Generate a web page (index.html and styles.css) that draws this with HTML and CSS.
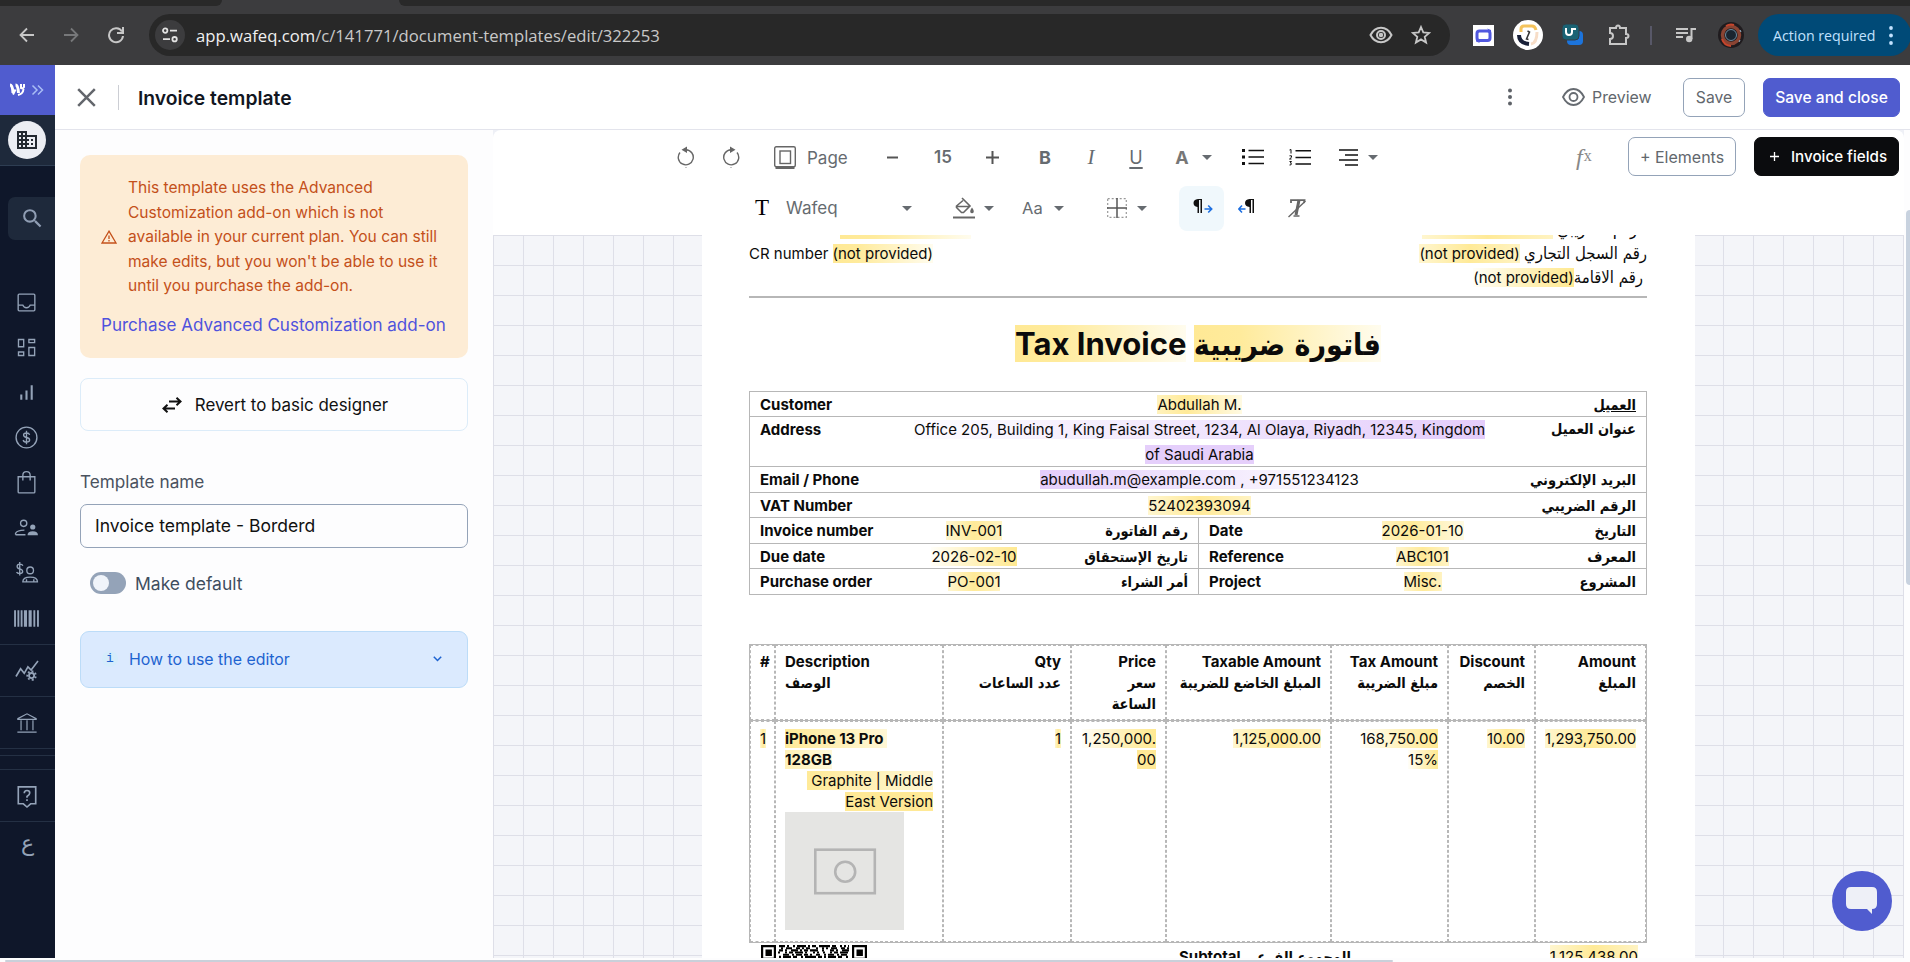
FILE: index.html
```html
<!DOCTYPE html>
<html lang="en">
<head>
<meta charset="utf-8">
<title>Invoice template</title>
<link rel="stylesheet" href="styles.css">
</head>
<body>
<div class="tabstrip"><span class="tab-left"></span><span class="tab-active"></span><span class="tab-right"></span></div>
<div class="browser">
  <svg class="b-back" width="16" height="16" viewBox="0 0 16 16" fill="none" stroke="#c7c7c7" stroke-width="1.8"><path d="M15 8H2M8 1.5L1.5 8L8 14.5"/></svg>
  <svg class="b-fwd" width="16" height="16" viewBox="0 0 16 16" fill="none" stroke="#77787a" stroke-width="1.8"><path d="M1 8H14M8 1.5L14.5 8L8 14.5"/></svg>
  <svg class="b-reload" width="18" height="18" viewBox="0 0 18 18" fill="none" stroke="#c7c7c7" stroke-width="2"><path d="M15 5.5A7 7 0 1 0 16 10"/><path d="M16 1v6h-6"/></svg>
  <div class="omnibox">
    <span class="site-info"><svg width="16" height="16" viewBox="0 0 16 16" fill="none" stroke="#e3e3e3" stroke-width="1.8"><circle cx="3.2" cy="3.6" r="2.2"/><path d="M8 3.6h7M1 12.2h7"/><circle cx="12.6" cy="12.2" r="2.2"/></svg></span>
    <span class="url"><b>app.wafeq.com</b>/c/141771/document-templates/edit/322253</span>
    <svg class="b-eye" width="24" height="18" viewBox="0 0 24 18" fill="none" stroke="#c7c7c7" stroke-width="2"><path d="M1.5 9C4 4 7.500 1.800 12 1.800S20 4 22.500 9C20 14 16.500 16.200 12 16.200S4 14 1.500 9z"/><circle cx="12" cy="9" r="4"/><circle cx="12" cy="9" r="1.200" fill="#c7c7c7"/></svg>
    <svg class="b-star" width="20" height="20" viewBox="0 0 20 20" fill="none" stroke="#c7c7c7" stroke-width="1.800"><path d="M10 2l2.300 5.400 5.900.5-4.500 3.900 1.400 5.700L10 14.400l-5.100 3.100 1.400-5.700L1.800 7.900l5.900-.5z"/></svg>
  </div>
  <svg class="x-one" width="21" height="21" viewBox="0 0 21 21"><path fill="#fff" d="M0 0h21v21H0z"/><rect x="4" y="6" width="13" height="9.500" rx="2.500" fill="none" stroke="#5158df" stroke-width="3"/><path fill="#5158df" d="M14 3.500l4 1.500v3zM7 18l-4-1.500v-3z"/></svg>
  <svg class="x-two" width="30" height="30" viewBox="0 0 30 30"><circle cx="15" cy="15" r="15" fill="#fff"/><path d="M8 12V9q0-3 3-3h8q3 0 4 4" fill="none" stroke="#f4c35c" stroke-width="3"/><path d="M6 15q0 8 10 9" fill="none" stroke="#182038" stroke-width="4"/><path d="M24 12q0 11-6 12" fill="none" stroke="#f7ddc7" stroke-width="3"/><path d="M14.500 11l2 1-3 7 2 .5" fill="none" stroke="#333" stroke-width="1.500"/></svg>
  <svg class="x-three" width="21" height="22" viewBox="0 0 21 22"><rect x="5" y="7" width="16" height="14" rx="4" fill="#1c74dc"/><rect width="17" height="16" rx="4" fill="#1a6374" stroke="#333c45"/><path d="M4 4v4q0 3 3 3 3 0 3-3V5h4" fill="none" stroke="#fff" stroke-width="2"/></svg>
  <svg class="x-puzzle" width="22" height="22" viewBox="0 0 22 22" fill="none" stroke="#c7c7c7" stroke-width="2"><path d="M2 4h6q0-2.500 2-2.500T12 4h6v6q2.500 0 2.500 2T18 14v6H2v-5q3 0 3-3T2 9z"/></svg>
  <span class="b-sep"></span>
  <svg class="x-music" width="20" height="16" viewBox="0 0 20 16" fill="none" stroke="#c7c7c7" stroke-width="2"><path d="M0 2h12M0 6h12M0 10h7M15.500 12V2H20"/><circle cx="13.200" cy="12" r="2.200" fill="#c7c7c7"/></svg>
  <svg class="x-avatar" width="26" height="26" viewBox="0 0 26 26"><circle cx="13" cy="13" r="13" fill="#1f1b1e"/><circle cx="13" cy="13" r="8.500" fill="none" stroke="#8a4433" stroke-width="3.500"/><path d="M4 17a10 10 0 0 0 9 7M8 4a10 10 0 0 1 8-1" fill="none" stroke="#c7452c" stroke-width="2"/><circle cx="13" cy="13" r="5.500" fill="#1a2530" stroke="#6d8ba0"/><path d="M22 8l1 2M22 18l-1 2" stroke="#9cb8cc"/></svg>
  <span class="action"><span>Action required</span><svg width="4" height="20" viewBox="0 0 4 20" fill="#c2e2ff"><circle cx="2" cy="2" r="1.900"/><circle cx="2" cy="9.500" r="1.900"/><circle cx="2" cy="17" r="1.900"/></svg></span>
</div>
<div class="app">
  <nav class="side">
    <div class="logo"><svg width="36" height="14" viewBox="0 0 36 14" fill="none" stroke="#fff"><path stroke-width="3" d="M2 2q2.500 0 3 8M7.500 2q2.500 0 3 8"/><path stroke-width="2" d="M5 11.500l2.500-5M10 12q5-1 5.500-6M13 1v4q2 1 3-1V1"/><path stroke="#a9bdf5" stroke-width="1.500" d="M24.500 2.500L29 7l-4.500 4.500M30 2.500L34.500 7 30 11.500"/></svg></div>
    <div class="account"><span><svg width="24" height="24" viewBox="0 0 24 24" fill="#222830"><path d="M12 7V3H2v18h20V7H12zM6 19H4v-2h2v2zm0-4H4v-2h2v2zm0-4H4V9h2v2zm0-4H4V5h2v2zm4 12H8v-2h2v2zm0-4H8v-2h2v2zm0-4H8V9h2v2zm0-4H8V5h2v2zm10 12h-8v-2h2v-2h-2v-2h2v-2h-2V9h8v10zm-2-8h-2v2h2v-2zm0 4h-2v2h2v-2z"/></svg></span></div>
    <div class="search"><svg width="25" height="25" viewBox="0 0 24 24" fill="#8f9db3"><path d="M15.500 14h-.79l-.28-.27A6.471 6.471 0 0 0 16 9.500 6.500 6.500 0 1 0 9.500 16c1.610 0 3.090-.59 4.230-1.570l.27.28v.79l5 4.990L20.490 19l-4.990-5zm-6 0C7.010 14 5 11.990 5 9.500S7.010 5 9.500 5 14 7.010 14 9.500 11.990 14 9.500 14z"/></svg></div>
    <div class="nav-main">
      <svg viewBox="0 0 24 24"><rect x="4" y="4" width="16" height="16" rx="1"/><path d="M4 14.500h4.500q.8 2.500 3.500 2.500t3.500-2.500H20"/></svg>
      <svg viewBox="0 0 24 24"><path d="M4.300 4.300h5v7h-5zM14.300 4.300h5.500v3h-5.500zM4.300 16.300h5v3.400h-5zM14.300 12h5.500v7.700h-5.500z"/></svg>
      <svg viewBox="0 0 24 24"><path stroke-width="2" d="M7 19v-5M12 19v-9M17 19V5"/></svg>
      <svg viewBox="0 0 24 24"><circle cx="12" cy="12" r="10"/><path d="M15 9.500q-.5-1.800-3-1.800-2.800 0-2.800 2 0 1.800 2.800 2.300 3 .5 3 2.400 0 2-3 2-2.700 0-3.200-2M12 5.500v13"/></svg>
      <svg viewBox="0 0 24 24"><path d="M4 6.500h16V21q0 1-1 1H5q-1 0-1-1zM8.500 10V5q0-3.500 3.500-3.500t3.500 3.500v5"/></svg>
      <svg viewBox="0 0 24 24"><circle cx="9.300" cy="8" r="3"/><path d="M1.500 19v-1.500q1.500-3 8.500-3M1.500 19H11"/><circle cx="18" cy="11.500" r="2.500" class="fill"/><path class="fill" d="M13 19.500q0-4 5-4t5 4z"/></svg>
      <svg viewBox="0 0 24 24"><path d="M8.500 4.500q-.5-1.500-3-1.500-2.500 0-2.500 2.200 0 1.800 2.500 2.300 2.800.6 2.800 2.600 0 2-2.800 2-2.500 0-3-1.500M5.500 1v13"/><circle cx="15.500" cy="9" r="3.200"/><path d="M8.500 20q0-4.500 7-4.500t7 4.500zM12 20v-2.500M19 20v-2.500"/></svg>
      <svg viewBox="0 0 24 24"><path stroke-width="1.800" d="M1 4v16M4.200 4v16M7.300 4v16M19.500 4v16M23 4v16"/><path stroke-width="3" d="M11 4v16M15.500 4v16"/></svg>
    </div>
    <div class="nav-item"><svg viewBox="0 0 24 24"><path stroke-width="1.800" d="M0 18l5-8.500 4 5 4-7 3.500 3.500L24 1"/><circle cx="17" cy="17" r="2.800" stroke-width="2"/><path stroke-width="2" stroke-dasharray="2 2.100" d="M17 12.300a4.700 4.700 0 1 1-.01 0"/></svg></div>
    <div class="nav-item"><svg viewBox="0 0 24 24"><path d="M2 7.200L12 2l10 5.200V8H2zM5.500 9v11M12 9v11M18.500 9v11M1.500 22h21"/></svg></div>
    <div class="nav-gap one"></div>
    <div class="nav-gap two"></div>
    <div class="nav-item help"><svg viewBox="0 0 24 24"><path stroke-width="1.800" d="M2.500 2h19v18.500H16L12 24l-4-3.500H2.500z"/><path stroke-width="1.800" d="M9 9q0-3 3-3t3 2.700q0 1.800-3 3.800V14M12 15.500v2"/></svg></div>
    <div class="lang">ع</div>
  </nav>
  <main class="main">
    <header class="head">
      <svg class="close" width="19" height="19" viewBox="0 0 19 19" fill="none" stroke="#63666c" stroke-width="2.500"><path d="M1.200 1.200L17.800 17.800M17.800 1.200L1.200 17.800"/></svg>
      <span class="vline"></span>
      <h1>Invoice template</h1>
      <svg class="dots" width="4" height="18" viewBox="0 0 4 18" fill="#5e6268"><circle cx="2" cy="2.500" r="2"/><circle cx="2" cy="9" r="2"/><circle cx="2" cy="15.500" r="2"/></svg>
      <svg class="eye" width="23" height="18" viewBox="0 0 23 18" fill="none" stroke="#666b71" stroke-width="1.800"><path d="M1 9Q5 1 11.500 1T22 9q-4 8-10.500 8T1 9z"/><circle cx="11.500" cy="9" r="4"/></svg>
      <span class="preview">Preview</span>
      <span class="btn save">Save</span>
      <span class="btn primary">Save and close</span>
    </header>
    <div class="body">
      <aside class="panel">
        <div class="warn">
          <div class="warn-row">
            <svg width="16" height="14" viewBox="0 0 16 14" fill="none" stroke="#c4501a" stroke-width="1.300"><path d="M8 1.200L15 13H1zM8 5.500v3.500M8 10v1.500"/></svg>
            <p>This template uses the Advanced<br>Customization add-on which is not<br>available in your current plan. You can still<br>make edits, but you won't be able to use it<br>until you purchase the add-on.</p>
          </div>
          <a>Purchase Advanced Customization add-on</a>
        </div>
        <div class="revert"><svg width="20" height="16" viewBox="0 0 20 16" fill="none" stroke="#111" stroke-width="2"><path d="M7 4.500h11.500M14.500.8l4 3.700-4 3.700M13 11.500H1.500M5.500 7.800l-4 3.700 4 3.700"/></svg><span>Revert to basic designer</span></div>
        <label class="field-label">Template name</label>
        <div class="field">Invoice template - Borderd</div>
        <div class="toggle-row"><span class="toggle"></span><span>Make default</span></div>
        <div class="howto"><i>i</i><span>How to use the editor</span><svg width="9" height="6" viewBox="0 0 9 6" fill="none" stroke="#1e63d0" stroke-width="1.500"><path d="M.8.8l3.700 3.700L8.200.8"/></svg></div>
      </aside>
      <section class="editor">
        <div class="bar">
          <div class="bar-row first">
            <svg class="slot undo" width="18" height="22" viewBox="0 0 18 22"><path fill="none" stroke="#666" stroke-width="1.400" d="M8 3.800h1A7.500 7.500 0 1 1 3 6.500"/><path fill="#666" d="M4.500 3.800L10 .5v6.600zM8.500 21.300h1v1h-1z"/></svg>
            <svg class="slot redo" width="18" height="22" viewBox="0 0 18 22"><path fill="none" stroke="#666" stroke-width="1.400" d="M10 3.800H9A7.500 7.500 0 1 0 15 6.500"/><path fill="#666" d="M13.500 3.800L8 .5v6.600zM8.500 21.300h1v1h-1z"/></svg>
            <svg class="pg" width="22" height="23" viewBox="0 0 22 23" fill="none" stroke="#666"><rect x=".7" y=".7" width="20.600" height="20" rx="1.500" stroke-width="1.400"/><rect x="6" y="5" width="10.500" height="12.500" stroke-width="1.400"/><path d="M1.500 22h19" stroke-width="2"/></svg>
            <span class="pg-text">Page</span>
            <svg class="minus" width="11" height="3" viewBox="0 0 11 3"><path fill="#555" d="M0 .5h11v2H0z"/></svg>
            <b class="size">15</b>
            <svg class="plus" width="13" height="13" viewBox="0 0 13 13" stroke="#555" stroke-width="2"><path d="M0 6.500h13M6.500 0v13"/></svg>
            <b class="fmt bold">B</b><span class="fmt ital">I</span><span class="fmt und">U</span>
            <b class="fmt colr">A</b><i class="caret c-a"></i>
            <svg class="ul" width="22" height="16" viewBox="0 0 22 16" stroke="#111" stroke-width="1.600"><path d="M6.500 1.500H22M6.500 8H22M6.500 14.500H22"/><path stroke-width="3" d="M0 1.500h3M0 8h3M0 14.500h3"/></svg>
            <svg class="ol" width="22" height="17" viewBox="0 0 22 17" stroke="#111" fill="none" stroke-width="1.600"><path d="M6.500 1.800H22M6.500 8.500H22M6.500 15H22"/><path stroke-width="1" d="M.5 1L2 .5v4M.5 6.800h2v1.500l-2 1.700h2M.5 12.500h2L1.300 14q1.200 0 1.200 1t-2 1"/></svg>
            <svg class="al" width="19" height="17" viewBox="0 0 19 17" stroke="#111" stroke-width="1.600"><path d="M0 1h19M6 6h13M0 11h19M6 16h13"/></svg><i class="caret c-b"></i>
            <span class="fx"><em>f</em><sup>x</sup></span>
            <span class="btn elements">+ Elements</span>
            <span class="btn fields"><svg width="9" height="9" viewBox="0 0 9 9" stroke="#fff" stroke-width="1.300"><path d="M0 4.500h9M4.500 0v9"/></svg>Invoice fields</span>
          </div>
          <div class="bar-row second">
            <span class="tt">T</span><span class="font-name">Wafeq</span><i class="caret c-c"></i>
            <svg class="bucket" width="22" height="22" viewBox="0 0 22 22" fill="none" stroke="#666" stroke-width="1.600"><path d="M9 1l8 8-6.500 6.500h-2L3.500 10.500V9L10 3.500M3.500 9.500H16"/><path d="M19 12q2 3 0 3.500-2-.5 0-3.500z" fill="#666"/><path d="M0 20.500h22" stroke-width="2"/></svg><i class="caret c-d"></i>
            <span class="aa">Aa</span><i class="caret c-e"></i>
            <svg class="grid-ic" width="20" height="20" viewBox="0 0 20 20" fill="none"><rect x=".7" y=".7" width="18.600" height="18.600" stroke="#999" stroke-width="1.200" stroke-dasharray="2 2"/><path d="M10 0v20M0 10h20" stroke="#555" stroke-width="1.500"/></svg><i class="caret c-f"></i>
            <span class="ltr"><svg width="20" height="15" viewBox="0 0 20 15"><path fill="#111" d="M9 0v14H7.500V1H6v13H4.500V8Q.5 7.500.5 4T5 0z"/><path d="M11.500 10h7M15.200 6.500l3.500 3.500-3.500 3.500" fill="none" stroke="#1d6fe0" stroke-width="1.600"/></svg></span>
            <svg class="rtl" width="17" height="15" viewBox="0 0 17 15"><path fill="#111" d="M16 0v14h-1.500V1H13v13h-1.500V8Q7 7.500 7 4t4.500-4z"/><path d="M7.500 10H1M4 6.500L.8 10 4 13.500" fill="none" stroke="#1d6fe0" stroke-width="1.600"/></svg>
            <svg class="clear" width="18" height="19" viewBox="0 0 18 19" fill="none" stroke="#666"><path stroke-width="1.800" d="M3 4V1.200h13.500L16 4"/><path stroke-width="3" d="M11 1L8 16"/><path stroke-width="1.400" d="M5.500 17h6M.5 18L17.500 2"/></svg>
          </div>
        </div>
        <div class="canvas">
          <div class="page">
            <div class="top">
              <div class="tl"><p>VAT number <mark class="y r">310112345600003</mark></p><p>CR number <mark class="y r">(not provided)</mark></p></div>
              <div class="tr"><p><mark class="y r134">310112345600003</mark> <span class="ar" dir="rtl">الرقم الضريبي</span></p><p><mark class="y mid">(not provided)</mark> <span class="ar a1" dir="rtl">رقم السجل التجاري</span></p><p class="shift"><mark class="y l">(not provided)</mark><span class="ar a2" dir="rtl">رقم الاقامة</span></p></div>
            </div>
            <h2><mark class="y r">Tax Invoice</mark> <mark class="y r" dir="rtl"><span class="arw">فاتورة ضريبية</span></mark></h2>
            <div class="info">
              <div class="row"><b>Customer</b><span><mark class="y cr">Abdullah M.</mark></span><b class="ar un" dir="rtl">العميل</b></div>
              <div class="row tall"><b>Address</b><span><mark class="p l">Office 205, Building 1, King Faisal Street, 1234, Al Olaya, Riyadh, 12345, Kingdom</mark><br><mark class="p full">of Saudi Arabia</mark></span><b class="ar" dir="rtl">عنوان العميل</b></div>
              <div class="row h26"><b>Email / Phone</b><span><mark class="p r">abudullah.m@example.com , +971551234123</mark></span><b class="ar" dir="rtl">البريد الإلكتروني</b></div>
              <div class="row"><b>VAT Number</b><span><mark class="y mid">52402393094</mark></span><b class="ar" dir="rtl">الرقم الضريبي</b></div>
              <div class="pair h26"><div><b>Invoice number</b><span><mark class="y mid">INV-001</mark></span><b class="ar" dir="rtl">رقم الفاتورة</b></div><div><b>Date</b><span><mark class="y cr">2026-01-10</mark></span><b class="ar" dir="rtl">التاريخ</b></div></div>
              <div class="pair"><div><b>Due date</b><span><mark class="y l">2026-02-10</mark></span><b class="ar" dir="rtl">تاريخ الإستحقاق</b></div><div><b>Reference</b><span><mark class="y mid">ABC101</mark></span><b class="ar" dir="rtl">المعرف</b></div></div>
              <div class="pair h26"><div><b>Purchase order</b><span><mark class="y mid">PO-001</mark></span><b class="ar" dir="rtl">أمر الشراء</b></div><div><b>Project</b><span><mark class="y mid">Misc.</mark></span><b class="ar" dir="rtl">المشروع</b></div></div>
            </div>
            <div class="items">
              <div class="irow ihead">
                <div>#</div>
                <div class="lft">Description<br><span class="ar">الوصف</span></div>
                <div>Qty<br><span class="ar">عدد الساعات</span></div>
                <div>Price<br><span class="ar">سعر<br>الساعة</span></div>
                <div>Taxable Amount<br><span class="ar">المبلغ الخاضع للضريبة</span></div>
                <div>Tax Amount<br><span class="ar">مبلغ الضريبة</span></div>
                <div>Discount<br><span class="ar">الخصم</span></div>
                <div>Amount<br><span class="ar">المبلغ</span></div>
              </div>
              <div class="irow ibody">
                <div class="lft"><mark class="y mid">1</mark></div>
                <div><p class="lft"><b><mark class="y r2">iPhone 13 Pro&nbsp;</mark><br><mark class="y l3">128GB</mark></b></p><mark class="y r2">&nbsp;Graphite | Middle</mark><br><mark class="y full">East Version</mark>
                  <svg class="photo" width="119" height="118" viewBox="0 0 119 118"><path fill="#e5e5e3" d="M0 0h119v118H0z"/><g fill="none" stroke="#b4b4b4" stroke-width="2.600"><rect x="30.300" y="37.700" width="59.500" height="43.500"/><circle cx="60.200" cy="59.700" r="10"/></g></svg></div>
                <div><mark class="y mid">1</mark></div>
                <div><mark class="y l">1,250,000.</mark><br><mark class="y full">00</mark></div>
                <div><mark class="y mid">1,125,000.00</mark></div>
                <div><mark class="y l">168,750.00</mark><br><mark class="y l">15%</mark></div>
                <div><mark class="y mid">10.00</mark></div>
                <div><mark class="y mid">1,293,750.00</mark></div>
              </div>
            </div>
            <div class="totals">
              <svg class="qr" width="106" height="16" viewBox="0 0 106 16" fill="none" stroke="#000"><path stroke-width="2.200" d="M1.100 1.100h12.800v12.800H1.100zM92.100 1.100h12.800v12.800H92.100z"/><path fill="#000" stroke="none" d="M4.500 4.500h6.400v6.400H4.500zM95.500 4.500h6.400v6.400h-6.400z"/><g stroke-width="2.150"><path stroke-dasharray="6 2 2 4 2 2 9 2 2 2 4 3 11 2 4 4 2 2 2 2" d="M18 1.100h70"/><path stroke-dasharray="2 3 6 4 4 2 2 2 4 6 2 4 2 2" d="M20 3.200h68"/><path stroke-dasharray="4 2 2 4 7 2 2 2 4 2 8 4 2 6" d="M18 5.400h70"/><path stroke-dasharray="2 5 2 2 4 2 8 2 2 6 2 2 2 4" d="M17 7.500h71"/><path stroke-dasharray="6 3 2 2 6 2 4 2 2 4 4 4 2 2" d="M22 9.700h66"/><path stroke-dasharray="2 2 8 2 4 4 2 2 11 2 4 2" d="M18 11.900h70"/></g></svg>
              <b class="sub">Subtotal <span class="ar">المجموع الفرعي</span></b>
              <mark class="y mid">1,125,438.00</mark>
            </div>
          </div>
          <div class="chat"><svg width="32" height="28" viewBox="0 0 32 28" fill="#eef0f7"><path d="M5 0h21q5 0 5 5v12q0 5-5 5v5l-5-5H5q-5 0-5-5V5q0-5 5-5z"/></svg></div>
        </div>
      </section>
    </div>
  </main>
  <div class="vscroll"></div>
</div>
<div class="hscroll"></div>
</body>
</html>
```
FILE: styles.css
```css
* { box-sizing: border-box; }
body { margin: 0; width: 1910px; height: 962px; overflow: hidden; background: #fdfdfe; font-family: Inter, "DejaVu Sans", sans-serif; color: #111; display: flex; flex-direction: column; }
svg { display: block; flex: none; }
p, h1, h2 { margin: 0; }

/* browser chrome */
.tabstrip { height: 8px; background: #3c3c3e; display: flex; flex: none; }
.tab-left { width: 222px; background: #292929; border-bottom-right-radius: 8px; height: 6px; }
.tab-active { width: 177px; }
.tab-right { flex: 1; background: #292929; border-bottom-left-radius: 8px; height: 6px; }
.browser { height: 57px; flex: none; background: #3c3c3e; display: flex; align-items: center; padding-bottom: 3px; font-family: "Open Sans", sans-serif; }
.b-back { margin-left: 19px; }
.b-fwd { margin-left: 28px; }
.b-reload { margin-left: 28px; }
.omnibox { margin-left: 24px; width: 1301px; height: 42px; border-radius: 21px; background: #282828; display: flex; align-items: center; flex: none; }
.site-info { width: 30px; height: 30px; border-radius: 50%; background: #3c3c3e; margin-left: 6px; display: flex; align-items: center; justify-content: center; }
.url { margin-left: 11px; font-size: 16.670px; color: #c9c9c9; width: 1173px; white-space: nowrap; }
.url b { font-weight: 400; color: #f0f0f0; }
.b-star { margin-left: 18px; }
.x-one { margin-left: 23px; }
.x-two { margin-left: 19px; }
.x-three { margin-left: 19px; }
.x-puzzle { margin-left: 25px; }
.b-sep { width: 2px; height: 19px; background: #585868; margin-left: 20px; flex: none; }
.x-music { margin-left: 24px; }
.x-avatar { margin-left: 22px; }
.action { margin-left: 14px; width: 153px; height: 42px; border-radius: 21px; background: #004a77; color: #c2e2ff; display: flex; align-items: center; padding-left: 15px; gap: 13px; font-size: 14.200px; white-space: nowrap; flex: none; }
.action svg { margin-top: 1px; }

/* sidebar */
.app { height: 893px; flex: none; display: flex; }
.side { width: 55px; flex: none; background: #0f172a; display: flex; flex-direction: column; color: #94a3b8; }
.side svg { margin: auto; }
.logo { height: 50px; background: #505ccf; display: flex; align-items: center; padding-right: 4px; }
.account { height: 51px; background: #1e293b; border-bottom: 1px solid #2e3d52; display: flex; }
.account span { width: 38px; height: 38px; margin: 6px 8px; border-radius: 50%; background: #ebedf3; display: flex; align-items: center; }
.search { height: 43px; margin: 31px 0 0 8px; background: #1e293b; border-radius: 7px 0 0 7px; display: flex; align-items: center; padding-left: 2px; }
.nav-main { padding: 50px 2px 0 0; height: 404px; }
.nav-main svg { width: 25px; height: 25px; margin: 0 auto 20.100px; }
.nav-main svg, .nav-item svg { fill: none; stroke: #94a3b8; stroke-width: 1.300; overflow: visible; }
.nav-main svg .fill { fill: #94a3b8; stroke: none; }
.nav-item { height: 52px; border-top: 1px solid #243044; padding-right: 2px; display: flex; flex: none; }
.nav-item svg { width: 22px; height: 22px; }
.nav-gap { border-top: 1px solid #243044; }
.nav-gap.one { height: 7px; }
.nav-gap.two { height: 14px; }
.lang { border-top: 1px solid #243044; font: 22px "DejaVu Sans", sans-serif; text-align: center; padding-top: 9px; flex: 1; }

/* header */
.main { width: 1848px; flex: none; display: flex; flex-direction: column; }
.head { height: 65px; width: 1855px; border-bottom: 1px solid #e3e4ec; display: flex; align-items: center; flex: none; background: #fff; }
.close { margin-left: 22px; margin-top: 1px; }
.vline { width: 1px; height: 25px; background: #ccced4; margin-left: 22px; }
h1 { font-size: 19.300px; font-weight: 600; margin-left: 19px; margin-top: 1px; width: 1370px; color: #12161f; white-space: nowrap; }
.eye { margin-left: 50px; }
.preview { margin-left: 7px; width: 72px; font-size: 15.900px; color: #62676d; }
.btn { height: 39px; border: 1px solid #94a3b8; border-radius: 7px; display: flex; align-items: center; justify-content: center; font-size: 16px; color: #62676d; flex: none; white-space: nowrap; background: #fff; }
.save { width: 62px; margin-left: 19px; font-size: 15.700px; }
.btn.primary { width: 137px; margin-left: 18px; background: #505ccf; border-color: #505ccf; color: #fff; font-weight: 500; font-size: 15.600px; }

/* left panel */
.body { display: flex; flex: 1; }
.panel { width: 438px; padding: 25px 25px 0; flex: none; }
.warn { height: 203px; border-radius: 10px; background: #fdecd5; padding: 21px 21px 0; }
.warn-row { display: flex; align-items: center; gap: 11px; color: #c4501a; font-size: 15.550px; line-height: 24.500px; white-space: nowrap; }
.warn-row svg { margin-top: -1px; }
.warn a { display: block; margin-top: 13px; line-height: 26px; font-size: 17.050px; color: #4f52dd; white-space: nowrap; }
.revert { height: 53px; margin-top: 20px; border: 1px solid #dcecf9; border-radius: 8px; display: flex; align-items: center; justify-content: center; gap: 13px; font-size: 16.900px; padding-left: 2px; }
.field-label { display: block; margin-top: 40px; line-height: 22px; font-size: 17.200px; color: #4a525e; }
.field { height: 44px; margin-top: 11px; border: 1px solid #94a3b8; border-radius: 7px; padding-left: 14px; line-height: 42px; font-size: 17.550px; }
.toggle-row { display: flex; align-items: center; margin: 24px 0 0 10px; gap: 9px; font-size: 17.500px; color: #3f4e5e; height: 22px; }
.toggle { width: 36px; height: 22px; border-radius: 11px; background: #94a3b8; padding: 3px; }
.toggle::before { content: ""; display: block; width: 16px; height: 16px; border-radius: 50%; background: #f0f4fa; }
.howto { height: 57px; margin-top: 37px; border: 1px solid #bcdcf8; border-radius: 9px; background: #dbeafe; display: flex; align-items: center; color: #1e63d0; font-size: 15.900px; padding-bottom: 1px; }
.howto i { width: 16px; height: 16px; margin-left: 21px; border-radius: 50%; background: #d5ecfb; font: 13px/16px "Liberation Mono", monospace; text-align: center; }
.howto span { margin-left: 11px; width: 304px; }

/* editor toolbar */
.editor { width: 1411px; flex: none; display: flex; flex-direction: column; background: #eef0f6; }
.bar { height: 105px; background: #fff; border-radius: 8px 8px 0 0; padding-left: 171px; color: #666b70; }
.bar-row { display: flex; align-items: center; height: 50px; white-space: nowrap; }
.first { height: 54px; }
.undo { margin-left: 13px; }
.redo { margin-left: 27px; }
.pg { margin-left: 34px; }
.pg-text { margin-left: 11px; width: 62px; font-size: 17px; margin-top: 2px; }
.minus { margin-left: 18px; }
.size { width: 56px; margin-left: 17px; text-align: center; font-size: 17px; font-weight: 600; }
.plus { margin-left: 15px; }
.fmt { width: 46px; text-align: center; font-size: 18px; }
.bold { margin-left: 23px; }
.ital { font: italic 21px "Liberation Serif", serif; }
.und { text-decoration: underline; text-underline-offset: 3px; text-decoration-thickness: 2px; margin-left: -1px; }
.colr { width: 16px; margin-left: 15px; color: #777; }
.caret { border: 5px solid transparent; border-top-color: #666b70; border-bottom: 0; flex: none; }
.c-a { margin-left: 12px; }
.ul { margin-left: 30px; }
.ol { margin-left: 25px; }
.al { margin-left: 28px; }
.c-b { margin-left: 10px; }
.fx { margin-left: 198px; width: 24px; font: 24px "Liberation Serif", serif; color: #888; }
.fx sup { font-size: 16px; vertical-align: 4px; margin-left: 1px; }
.elements { width: 108px; margin-left: 28px; margin-top: -1px; }
.fields { width: 145px; margin-left: 18px; margin-top: -1px; background: #0b0c0e; border-color: #0b0c0e; color: #fff; gap: 12px; padding-left: 4px; font-weight: 500; font-size: 15.200px; }
.second { height: 48px; }
.tt { margin-left: 91px; width: 15px; font: 23px "Liberation Serif", serif; color: #000; }
.font-name { margin-left: 16px; width: 116px; font-size: 17px; }
.c-d { margin-left: 9px; }
.bucket { margin-left: 41px; }
.aa { margin-left: 28px; width: 24px; font-size: 16.500px; }
.c-e { margin-left: 8px; }
.grid-ic { margin-left: 43px; }
.c-f { margin-left: 10px; }
.ltr { margin-left: 32px; width: 45px; height: 45px; border-radius: 8px; background: #f0f8fc; display: flex; align-items: center; justify-content: center; flex: none; padding: 0 0 3px 2px; }
.rtl { margin-left: 14px; margin-top: -3px; }
.clear { margin-left: 33px; }

/* canvas */
.canvas { position: relative; height: 723px; width: 1411px; padding-left: 209px; overflow: hidden; background-color: #f4f5f9; background-image: linear-gradient(#dedfe8 1px, transparent 1px), linear-gradient(90deg, #dedfe8 1px, transparent 1px); background-size: 30px 30px; }
.page { width: 993px; height: 723px; background: #fff; padding: 0 48px 0 47px; font-size: 15px; color: #0b0b0b; overflow: hidden; }
mark { color: inherit; white-space: nowrap; }
.y.r { background: linear-gradient(90deg, #ffe995, #ffeb9c 25%, #fffcee); }
.y.r134, .y.mid { background: linear-gradient(90deg, #fff6cf, #ffea98 50%, #fff3c2); }
.y.l { background: linear-gradient(90deg, #fffef8, #fff2bd 50%, #ffe991); }
.y.l3 { background: linear-gradient(90deg, #fff0b5, #fff8da); }
.y.r2 { background: linear-gradient(90deg, #ffea98, #fff7d5); }
.y.cr { background: linear-gradient(90deg, #fff2bd, #ffea98 35%, #fffae2); }
.y.full { background: #ffe996; }
.p.l { background: linear-gradient(90deg, #fdfbff, #f1e6fd 50%, #e4cdfb); }
.p.r { background: linear-gradient(90deg, #e4cdfb, #f1e6fd 50%, #fff); }
.p.full { background: #e5cffb; }
.ar { font-family: "DejaVu Sans Condensed", "DejaVu Sans", sans-serif; font-stretch: condensed; font-size: 14.500px; line-height: 1; }
.top { display: flex; justify-content: space-between; margin-top: -17px; line-height: 24px; height: 80px; border-bottom: 2px solid #b7b7b7; white-space: nowrap; }
.top p { height: 24px; }
.top .ar { font-size: 16.600px; }
.tr { text-align: right; }
.shift { padding-right: 4px; }
h2 { font-size: 31px; line-height: 38px; font-weight: 700; text-align: center; margin-top: 27px; height: 38px; white-space: nowrap; }
.arw { font-family: "DejaVu Sans Condensed", "DejaVu Sans", sans-serif; font-stretch: condensed; font-size: 30px; line-height: 1; }
.info { margin-top: 28px; border: 1px solid #b7b7b7; border-bottom: 0; line-height: 24px; }
.info b { font-weight: 700; white-space: nowrap; }
.row { display: grid; grid-template-columns: 151px 1fr 148px; height: 25px; padding: 1px 10px 0; border-bottom: 1px solid #b7b7b7; text-align: center; }
.row.tall { height: 50px; line-height: 25px; padding-top: 0; }
.row.h26, .pair.h26 { height: 26px; }
.row b:first-child, .pair b:first-child { text-align: left; }
.un { text-decoration: underline; }
.pair { display: grid; grid-template-columns: 449px 1fr; height: 25px; border-bottom: 1px solid #b7b7b7; text-align: center; }
.pair > div { display: grid; grid-template-columns: 130px 1fr 130px; padding: 1px 10px 0; }
.pair > div:first-child { border-right: 1px solid #b7b7b7; }
.info b.ar { text-align: right; line-height: 24px; }

/* line items */
.items { margin-top: 49px; border: 1px solid #b7b7b7; }
.irow { display: grid; grid-template-columns: 25px 168px 128px 95px 165px 117px 87px 1fr; line-height: 21px; text-align: right; }
.irow > div { border: 1px dashed #b7b7b7; padding: 5px 9px 0; min-width: 0; white-space: nowrap; }
.irow .lft { text-align: left; }
.irow b, .ihead { font-weight: 700; }
.ihead { height: 76px; border-bottom: 1px solid #b7b7b7; }
.ibody { height: 221px; }
.ibody > div { padding-top: 6px; }
.totals { display: flex; padding: 2px 9px 0 12px; line-height: 24px; white-space: nowrap; height: 30px; }
.totals b { font-weight: 700; }
.sub { margin-left: 312px; width: 371px; }
.chat { position: absolute; left: 1339px; top: 636px; width: 60px; height: 60px; border-radius: 50%; background: #505ccf; display: flex; align-items: center; justify-content: center; }

/* scrollbars */
.vscroll { width: 4px; height: 375px; margin: 145px 0 0 3px; border-radius: 4px 0 0 4px; background: #c8d2df; }
.hscroll { width: 1388px; height: 2px; margin: 2px 0 0 5px; border-radius: 2px; background: #c9d0da; flex: none; }
```
